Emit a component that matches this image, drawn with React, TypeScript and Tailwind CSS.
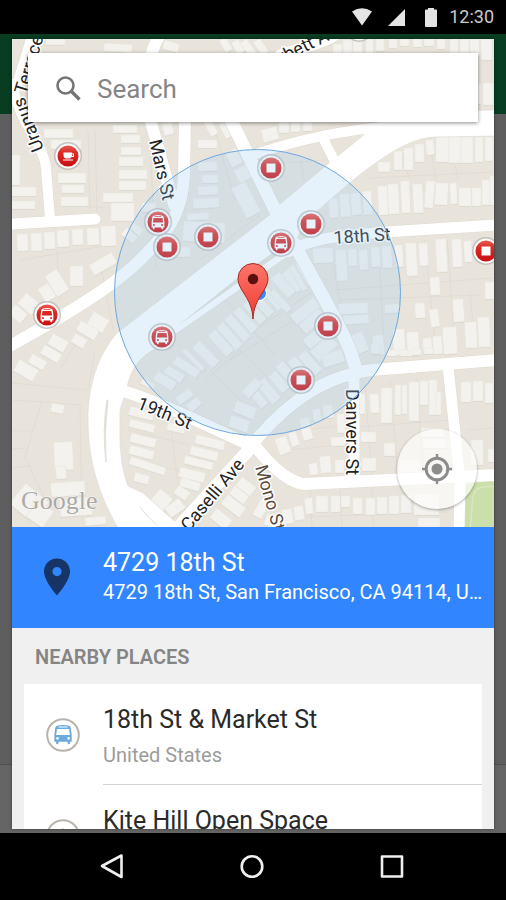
import { useState } from "react";

type Box = [x: number, y: number, w: number, h: number, rotate?: number];

const buildings: Box[] = [
  // north west
  [46, 39, 19, 6], [104, 44, 28, 8, 3], [163, 42, 16, 9, 15], [44, 129, 29, 9], [51, 140, 30, 9],
  [12, 155, 8, 30], [12, 187, 24, 9], [12, 201, 23, 8], [58, 173, 28, 10], [62, 185, 22, 8],
  [61, 197, 27, 9], [113, 125, 24, 8], [121, 135, 19, 8], [121, 147, 20, 8], [119, 157, 24, 9],
  [119, 170, 28, 9], [119, 181, 27, 9], [103, 193, 30, 9], [111, 203, 23, 18],
  [17, 234, 11, 17, -2], [31, 233, 11, 18, -2], [44, 232, 11, 17, -2], [57, 230, 12, 17, -2],
  [72, 229, 11, 16, -2], [87, 228, 12, 17, -2], [101, 226, 15, 20, -2],
  [70, 266, 13, 20], [90, 258, 26, 12, -30], [50, 271, 14, 24, -32], [41, 285, 12, 16, -32],
  [22, 295, 14, 18, -50], [12, 306, 12, 16, -50], [89, 315, 18, 15, 30], [77, 325, 21, 11, 30],
  [72, 336, 14, 10, 30], [49, 337, 18, 12, 30], [41, 349, 20, 10, 30], [29, 357, 17, 10, 30],
  [15, 364, 22, 13, 30],
  // south west
  [51, 404, 13, 9, 10], [54, 442, 19, 28, -3], [56, 466, 10, 13, -3], [51, 482, 34, 14, -4],
  [60, 498, 32, 18, -4], [85, 517, 21, 8, -5], [14, 490, 30, 26, 40], [30, 504, 20, 20, 35],
  // between 19th and caselli
  [141, 381, 14, 6, 25], [129, 409, 25, 9, 14], [129, 422, 26, 8, 14], [130, 436, 26, 9, 14],
  [129, 448, 25, 9, 14], [129, 462, 37, 8, 18], [134, 474, 15, 9, 14], [167, 424, 18, 8, 14],
  [195, 438, 30, 9, 14], [190, 449, 28, 9, 14], [184, 459, 29, 8, 14], [179, 470, 26, 10, 14],
  [180, 480, 20, 9, 16], [175, 488, 14, 10, 35], [153, 492, 17, 16, 40], [166, 502, 18, 12, -35],
  [237, 481, 18, 11, 38], [230, 490, 18, 10, 38], [222, 500, 23, 12, 38], [211, 513, 20, 12, 38],
  [256, 500, 10, 18, 30],
  // north, around mars st
  [163, 123, 10, 12, -15], [198, 140, 19, 8], [198, 162, 19, 9, -2], [202, 175, 16, 8],
  [198, 186, 20, 9, -3], [193, 198, 26, 10, -3], [187, 213, 22, 7, -3], [183, 222, 42, 20, 3],
  [173, 247, 17, 10], [142, 203, 14, 9], [122, 231, 15, 9, 40], [130, 225, 13, 8, 40],
  [207, 120, 8, 16, -28], [222, 122, 9, 16, -28], [228, 150, 12, 16, -28], [236, 167, 14, 14, -28],
  [238, 183, 16, 34, -28], [245, 39, 8, 20, -35], [257, 39, 8, 16, -35], [234, 40, 8, 14, -30],
  [222, 38, 8, 14, -30], [262, 128, 16, 13, -15], [279, 122, 10, 11], [291, 122, 9, 10], [303, 122, 9, 9],
  // north east
  [333, 44, 9, 12], [343, 40, 9, 14], [353, 39, 9, 14], [366, 39, 7, 14], [376, 39, 8, 12],
  [389, 39, 8, 9], [400, 39, 9, 7], [413, 39, 9, 8], [424, 39, 10, 7], [437, 39, 8, 10],
  [450, 39, 8, 14], [460, 39, 9, 14], [470, 39, 9, 18], [481, 39, 11, 21], [478, 84, 3, 20], [483, 83, 10, 22],
  [378, 162, 12, 10], [394, 151, 8, 19], [404, 148, 9, 22], [415, 144, 9, 18], [426, 140, 8, 15, -5],
  [436, 137, 13, 25], [449, 136, 12, 27], [461, 137, 12, 26], [475, 137, 8, 25], [485, 137, 8, 24],
  [329, 198, 9, 20, -5], [340, 194, 10, 23, -5], [351, 193, 10, 22, -5], [363, 191, 9, 24, -3],
  [378, 186, 10, 29, -3], [388, 184, 11, 30, -3], [401, 181, 9, 32, -3], [413, 184, 10, 29, -3],
  [425, 181, 9, 27, 5], [435, 183, 13, 22, 3], [450, 183, 7, 21, -3], [459, 188, 12, 18],
  [472, 188, 9, 18], [482, 180, 8, 25], [490, 176, 4, 29],
  // east, below 18th
  [313, 248, 20, 15, -3], [336, 250, 11, 31, -3], [348, 249, 9, 17, -3], [359, 250, 9, 20, -3],
  [371, 247, 9, 20, -3], [382, 246, 10, 22, -3], [395, 245, 8, 22, -3], [406, 243, 11, 33, -3],
  [419, 243, 9, 23, -3], [436, 239, 11, 33, -3], [452, 239, 10, 28, -3], [464, 241, 8, 21, -3],
  [430, 277, 10, 18, -3], [485, 282, 10, 17], [415, 303, 10, 15, -4], [453, 299, 11, 23, -4],
  [430, 309, 9, 18, -8], [465, 322, 12, 26, -3], [478, 317, 12, 30, -3], [443, 327, 14, 27, -3],
  [433, 336, 9, 18, -3], [423, 338, 9, 16, -3], [407, 332, 12, 24, -3], [393, 329, 12, 26, -3],
  [338, 303, 30, 11, -3], [343, 315, 26, 9, -3], [385, 304, 15, 9, -3], [353, 333, 13, 20, -22],
  [373, 335, 11, 20, -5],
  // below market
  [278, 272, 11, 26, -42], [288, 268, 11, 24, -42], [295, 264, 6, 28, -30], [301, 261, 5, 26, -30],
  [268, 284, 8, 28, -42], [277, 288, 7, 26, -42], [258, 292, 9, 26, -42], [250, 299, 9, 26, -42],
  [241, 306, 9, 28, -42], [233, 313, 9, 30, -42], [225, 321, 9, 30, -42], [216, 329, 10, 28, -42],
  [201, 340, 10, 29, -45], [191, 346, 5, 28, -45], [182, 353, 9, 28, -58], [170, 364, 9, 20, -58],
  [160, 370, 10, 22, -60], [299, 296, 12, 30, 52], [306, 308, 12, 26, 50], [311, 322, 12, 28, 50],
  [317, 335, 14, 26, 48], [322, 352, 22, 13, -18], [305, 350, 10, 26, -42], [294, 356, 10, 24, -42],
  [282, 361, 10, 24, -42], [274, 371, 10, 22, -42], [263, 378, 11, 26, -40], [252, 383, 9, 26, -40],
  [242, 383, 20, 10, -48], [234, 404, 22, 12, 22], [229, 418, 20, 12, 18], [176, 392, 17, 9, -35],
  [187, 400, 14, 9, -40],
  // south east
  [370, 394, 9, 19, -3], [359, 394, 6, 20], [381, 388, 11, 35], [395, 385, 6, 30], [402, 385, 5, 29],
  [409, 382, 10, 39], [420, 381, 8, 24], [429, 380, 8, 35], [436, 392, 5, 23], [461, 382, 10, 20],
  [473, 381, 10, 20], [485, 383, 8, 20], [361, 432, 15, 10], [384, 443, 11, 13], [362, 458, 14, 13],
  [421, 428, 23, 9], [423, 439, 23, 9], [399, 460, 20, 13], [471, 440, 12, 25], [488, 449, 6, 13],
  [277, 437, 12, 17, -20], [290, 432, 8, 14, -20], [302, 427, 10, 13, -15], [300, 418, 10, 9, -12],
  [313, 409, 8, 13, -10], [323, 405, 10, 13, -5], [337, 414, 8, 19, -3], [320, 456, 11, 17, -5],
  [309, 463, 9, 12, -8], [331, 437, 14, 9, -3], [335, 460, 9, 13], [371, 344, 10, 10],
  [265, 515, 12, 12, 20], [282, 509, 11, 15, -10], [294, 506, 10, 14, -8], [305, 498, 8, 16, -5],
  [316, 496, 12, 16], [331, 496, 9, 16], [341, 496, 9, 11], [353, 498, 9, 16], [366, 498, 9, 17],
  [377, 497, 10, 17], [389, 496, 10, 18], [401, 495, 10, 18], [414, 494, 25, 21], [418, 518, 22, 9],
  [387, 350, 10, 6], [400, 350, 8, 6], [412, 349, 9, 6], [424, 348, 9, 6],
];

const parcels =
  "M12 383 L84 390 M42 401 L25 457 L45 500 M80 404 L82 520 M12 431 L32 431 M12 449 L28 448 M12 468 L30 466 M12 400 L43 402 L81 405 " +
  "M60 370 L78 340 M88 390 L95 350 M100 260 L115 340 M20 260 L110 245 M57 250 L60 300 M95 130 L97 215 M88 130 L90 210 M75 205 L105 208 " +
  "M150 140 L156 270 M170 420 L180 500 M128 430 L190 445 M128 457 L180 471 M205 450 L160 520 M225 300 L275 355 M240 350 L290 400 M210 370 L250 410 " +
  "M255 330 L330 280 M230 360 L310 310 M205 380 L240 350 M330 245 L345 330 M335 290 L493 278 M340 300 L480 295 M378 240 L384 345 M425 240 L435 345 M447 240 L455 345 M470 290 L475 345 " +
  "M370 178 L493 172 M400 150 L410 180 M430 145 L436 180 M455 165 L458 180 M365 385 L372 475 M390 380 L398 475 M417 378 L423 472 M358 427 L450 420 M300 430 L350 425 M290 450 L347 444 " +
  "M310 490 L312 527 M340 490 L342 527 M372 490 L373 527 M300 517 L450 512 M468 400 L493 398 M468 430 L493 428 M200 260 L260 215 M215 130 L235 200 M255 165 L325 160 M300 160 L304 180";

const roads: [d: string, width: number][] = [
  ["M31 39 L16 88", 10],
  ["M12 84 C20 125 44 145 46 168 L50 219", 10],
  ["M12 224 L95 219", 11],
  ["M162 32 C148 50 144 85 149 115 L174 205", 12],
  ["M185 115 L184 175 C183 215 165 235 140 260 C112 288 60 318 8 347", 12],
  ["M225 108 L278 216", 13],
  ["M256 154 C300 139 345 130 392 126", 10],
  ["M324 140 L338 168", 10],
  ["M280 55 C310 45 335 42 345 25", 11],
  ["M496 225 L385 232 C345 236 315 236 288 252", 11],
  ["M294 243 C310 275 338 320 350 350 L357 372", 13],
  ["M354 372 L354 480", 11],
  ["M496 360 L372 370 C325 376 290 400 254 442", 12],
  ["M120 390 C160 402 205 425 254 447", 12],
  ["M254 444 L174 532", 13],
  ["M250 440 C270 465 285 480 303 484 L496 475", 12],
  ["M448 366 L460 480 L459 530", 11],
];

const market =
  "M496 110 L390 112 L360 138 L338 156 L329 163 L280 204 L272 213 L117 333 C98 355 88 385 88 420 C88 470 105 505 118 528 L182 528 L143 493 L128 486 C118 460 120 430 120 410 L127 388 C130 370 140 358 150 352 L290 255 L300 232 L316 212 L353 180 C385 155 410 138 435 137 L496 136 Z";

type Label = { text: string; x: number; y: number; rotate: number; color?: string };

const labels: Label[] = [
  { text: "Uranus", x: 44, y: 149, rotate: -111 },
  { text: "Terrace", x: 26, y: 95, rotate: -73 },
  { text: "Corbett Ave", x: 262, y: 73, rotate: -26 },
  { text: "Mars St", x: 149, y: 141, rotate: 77 },
  { text: "18th St", x: 334, y: 244, rotate: -4 },
  { text: "19th St", x: 136, y: 408, rotate: 22 },
  { text: "Danvers St", x: 346, y: 389, rotate: 90 },
  { text: "Caselli Ave", x: 189, y: 532, rotate: -50 },
  { text: "Mono St", x: 255, y: 467, rotate: 74, color: "#5a4a3c" },
];

type Poi = { kind: "bus" | "stop" | "cafe"; x: number; y: number };

const pois: Poi[] = [
  { kind: "cafe", x: 68, y: 156 },
  { kind: "stop", x: 359, y: 28 },
  { kind: "stop", x: 271, y: 168 },
  { kind: "bus", x: 158, y: 222 },
  { kind: "stop", x: 167, y: 247 },
  { kind: "stop", x: 208, y: 237 },
  { kind: "bus", x: 281, y: 243 },
  { kind: "stop", x: 311, y: 224 },
  { kind: "stop", x: 486, y: 251 },
  { kind: "bus", x: 47, y: 315 },
  { kind: "bus", x: 162, y: 337 },
  { kind: "stop", x: 328, y: 326 },
  { kind: "stop", x: 301, y: 380 },
];

// 16x18 bus seen from the front, shared by the map and the list
const busPath =
  "M2.5 0.9 Q8 -0.7 13.5 0.9 Q14.9 1.4 15.2 3 L16 9 V15.6 H14.4 V17.2 Q13.3 18.6 12.2 17.2 V15.6 H3.8 V17.2 Q2.7 18.6 1.6 17.2 V15.6 H0 V9 L0.8 3 Q1.1 1.4 2.5 0.9 Z M3.8 1.6 V2.6 H12.2 V1.6 Z M2.4 3.8 L1.6 9.4 H14.4 L13.6 3.8 Z M2.9 11.4 A1.2 1.2 0 1 0 2.9 13.8 A1.2 1.2 0 1 0 2.9 11.4 Z M13.1 11.4 A1.2 1.2 0 1 0 13.1 13.8 A1.2 1.2 0 1 0 13.1 11.4 Z";

function PoiMarker({ kind, x, y }: Poi) {
  return (
    <g transform={`translate(${x} ${y})`}>
      <circle r="14" fill="#b9b7b4" opacity="0.8" />
      <circle r="12.5" fill="#fbfbfb" />
      <circle r="10.5" fill="url(#poi)" />
      {kind === "stop" && <rect x="-4.5" y="-4.5" width="9" height="9" fill="#fff" />}
      {kind === "bus" && <path d={busPath} transform="translate(-6.4 -7) scale(0.8)" fill="#fff" fillRule="evenodd" />}
      {kind === "cafe" && (
        <g fill="#fff">
          <path d="M-4.5 -3.5 H4 V-2.5 H6 V1 H3.5 Q2.5 2.5 1 2.5 H-2 Q-4.5 2 -4.5 -1 Z M4 -1.5 V0 H5 V-1.5 Z" fillRule="evenodd" />
          <rect x="-5" y="3.5" width="10" height="1" />
        </g>
      )}
    </g>
  );
}

function StreetMap() {
  return (
    <svg viewBox="12 39 482 488" preserveAspectRatio="xMidYMid slice" className="block h-full w-full" role="img" aria-label="Map">
      <defs>
        <linearGradient id="poi" x1="0" y1="0" x2="0" y2="1">
          <stop offset="0" stopColor="#e85a52" />
          <stop offset="0.35" stopColor="#dc2a25" />
          <stop offset="1" stopColor="#c90f12" />
        </linearGradient>
        <linearGradient id="pin" x1="0" y1="0" x2="0" y2="1">
          <stop offset="0" stopColor="#fe7569" />
          <stop offset="1" stopColor="#ee3d33" />
        </linearGradient>
      </defs>
      <rect x="0" y="30" width="506" height="510" fill="#e8e4dc" />
      <path d={parcels} fill="none" stroke="#ded9d0" strokeWidth="0.7" />
      {buildings.map(([x, y, w, h, rotate = 0], i) => (
        <g key={i} transform={`rotate(${rotate} ${x + w / 2} ${y + h / 2})`}>
          <rect x={x} y={y + 0.8} width={w} height={h} fill="#d8d4cb" />
          <rect x={x} y={y} width={w} height={h} fill="#f3f2ee" stroke="#e8e5de" strokeWidth="0.5" />
        </g>
      ))}
      <path d="M466 484 L496 480 V530 H464 Z" fill="#cbdfaa" />
      <path d="M470 530 L473 496 Q475 488 483 487 L496 486" fill="none" stroke="#d9e6c2" strokeWidth="1.5" />

      <g fill="none" strokeLinejoin="round" strokeLinecap="round">
        {roads.map(([d, width]) => (
          <path key={d} d={d} stroke="#dfdad0" strokeWidth={width + 1} />
        ))}
      </g>
      <path d={market} fill="#fff" stroke="#dfdad0" strokeWidth="0.6" />
      <g fill="none" stroke="#fff" strokeLinejoin="round" strokeLinecap="round">
        {roads.map(([d, width]) => (
          <path key={d} d={d} strokeWidth={width} />
        ))}
      </g>
      <path d="M331 144 L360 138 L338 156 Z" fill="#e8e4dc" />
      <path d="M176 327 L240 276 L288 242 L291 246 L243 279 Z" fill="#e3dfd7" />
      <path d="M107 400 Q102 430 106 462 Q104 430 108 400 Z" fill="#e3dfd7" stroke="#e3dfd7" />
      <path d="M140 507 Q148 518 157 525" fill="none" stroke="#e3dfd7" />

      <g fontFamily="Roboto, sans-serif" fontSize="18" stroke="#fff" strokeWidth="3" strokeLinejoin="round" paintOrder="stroke">
        {labels.map(({ text, x, y, rotate, color = "#222" }) => (
          <text key={text} transform={`translate(${x} ${y}) rotate(${rotate})`} fill={color}>
            {text}
          </text>
        ))}
      </g>
      {pois.map((poi) => (
        <PoiMarker key={`${poi.x}-${poi.y}`} {...poi} />
      ))}
      <circle cx="257.5" cy="292.5" r="143" fill="#9fcdf0" fillOpacity="0.26" stroke="#6ea8de" strokeWidth="1" />

      <circle cx="259" cy="293" r="8" fill="#fff" />
      <circle cx="259" cy="293" r="7" fill="#3f86f7" />
      <path
        d="M253 319 C252 297 238 291 238 278.5 A15 15 0 0 1 268 278.5 C268 291 254 297 253 319 Z"
        fill="url(#pin)"
        stroke="#a52b22"
        strokeWidth="1"
      />
      <circle cx="253" cy="279" r="5.2" fill="#5b100d" />

      <text x="21" y="509" fontFamily="'Liberation Serif', serif" fontSize="26" fill="#9c9a96" stroke="#fff" strokeWidth="1" paintOrder="stroke" opacity="0.8">
        Google
      </text>
    </svg>
  );
}

function StatusBar() {
  return (
    <header className="flex h-[34px] shrink-0 items-center justify-end bg-black pr-3 text-[#e4e4e4]">
      <svg viewBox="0 0 20 18" className="mr-4 h-[18px] w-5" fill="currentColor" aria-hidden="true">
        <path d="M0 3.5 Q10 -3 20 3.5 L10 17.5 Z" />
      </svg>
      <svg viewBox="0 0 17 17" className="mr-5 size-[17px]" fill="currentColor" aria-hidden="true">
        <path d="M0 17 L17 0 V17 Z" />
      </svg>
      <svg viewBox="0 0 12 19" className="mr-3 h-[19px] w-3" fill="currentColor" aria-hidden="true">
        <path d="M3 0 H9 V1.5 H11 Q12 1.5 12 2.5 V18 Q12 19 11 19 H1 Q0 19 0 18 V2.5 Q0 1.5 1 1.5 H3 Z" />
      </svg>
      <time className="text-lg text-[#cacaca]">12:30</time>
    </header>
  );
}

function NavBar() {
  return (
    <nav className="flex h-[67px] shrink-0 justify-center bg-black text-[#f0f0f0]">
      <button type="button" aria-label="Back" className="flex w-[140px] items-center justify-center">
        <svg viewBox="0 0 26 26" className="size-[26px]" fill="none" stroke="currentColor" strokeWidth="2.6" strokeLinejoin="round">
          <path d="M2 12 L21.5 1.5 V23 Z" />
        </svg>
      </button>
      <button type="button" aria-label="Home" className="flex w-[140px] items-center justify-center">
        <svg viewBox="0 0 26 26" className="size-[26px]" fill="none" stroke="currentColor" strokeWidth="2.6">
          <circle cx="12" cy="12.5" r="10.3" />
        </svg>
      </button>
      <button type="button" aria-label="Recent apps" className="flex w-[140px] items-center justify-center">
        <svg viewBox="0 0 26 26" className="size-[26px]" fill="none" stroke="currentColor" strokeWidth="2.6" strokeLinejoin="round">
          <rect x="2" y="2.5" width="20" height="20" />
        </svg>
      </button>
    </nav>
  );
}

const places = [
  { name: "18th St & Market St", detail: "United States", icon: "bus" },
  { name: "Kite Hill Open Space", detail: "United States", icon: "park" },
];

function PlaceIcon({ icon }: { icon: string }) {
  return (
    <svg viewBox="0 0 34 34" className="size-[34px] shrink-0" aria-hidden="true">
      <circle cx="17" cy="17" r="15.8" fill="#fff" stroke="#b9b4ab" strokeWidth="2" />
      {icon === "bus" ? (
        <path d={busPath} transform="translate(8.4 6.8) scale(1.08)" fill="#6da9dd" fillRule="evenodd" />
      ) : (
        <path d="M17 9 L23 18 H20 L24 24 H18 V27 H16 V24 H10 L14 18 H11 Z" fill="#7cb93f" />
      )}
    </svg>
  );
}

export default function App() {
  const [query, setQuery] = useState("");

  return (
    <div className="flex h-screen flex-col bg-black font-[Roboto,sans-serif]">
      <StatusBar />

      <main className="relative flex min-h-0 flex-1 flex-col bg-[#5e5e5e] px-3 pt-[5px] pb-1">
        <div className="absolute inset-x-0 top-0 h-20 bg-[#083d22]" />
        <div className="absolute inset-x-0 bottom-0 h-[69px] border-t border-[#505050] bg-[#656565]" />

        <div className="relative flex min-h-0 flex-1 flex-col overflow-hidden bg-[#f0f0f0] shadow-[0_0_3px_rgba(0,0,0,0.4)]">
          <section className="relative h-[488px] shrink-0">
            <StreetMap />
            <label className="absolute inset-x-4 top-3.5 flex h-[69px] items-center bg-white pt-0.5 pl-[27px] shadow-[0_1px_4px_rgba(0,0,0,0.45)]">
              <svg viewBox="0 0 26 26" className="mr-4 size-[26px] shrink-0" fill="none" stroke="#757575" aria-hidden="true">
                <circle cx="10.5" cy="9.5" r="8" strokeWidth="2.6" />
                <path d="M16 15 L24.5 23.5" strokeWidth="3.4" />
              </svg>
              <input
                type="text"
                value={query}
                onChange={(e) => setQuery(e.target.value)}
                placeholder="Search"
                aria-label="Search"
                className="min-w-0 flex-1 bg-transparent text-[26px] leading-8 outline-none placeholder:text-[#858585]"
              />
            </label>
            <button
              type="button"
              aria-label="My location"
              className="absolute right-[17px] bottom-[18px] flex size-20 items-center justify-center rounded-full bg-white/65 shadow-[0_1px_3px_rgba(0,0,0,0.35)]"
            >
              <svg viewBox="0 0 32 32" className="size-8" fill="none" stroke="#8c8c8c" strokeWidth="3">
                <circle cx="16" cy="16" r="10.8" />
                <circle cx="16" cy="16" r="5.5" fill="#8c8c8c" stroke="none" />
                <path d="M16 1 V6 M16 26 V31 M1 16 H6 M26 16 H31" strokeWidth="2.4" />
              </svg>
            </button>
          </section>

          <button type="button" className="flex h-[101px] shrink-0 bg-[#3185ff] pr-2 pl-8 text-left text-white">
            <svg viewBox="0 0 26 38" className="mt-[31px] mr-[33px] h-[38px] w-[26px] shrink-0" aria-hidden="true">
              <path d="M13 0.5 C5.5 0.5 0 6.3 0 13.5 C0 23 13 37.5 13 37.5 C13 37.5 26 23 26 13.5 C26 6.3 20.5 0.5 13 0.5 Z M13 9 A4.6 4.6 0 1 1 13 18.2 A4.6 4.6 0 1 1 13 9 Z" fill="#163466" fillRule="evenodd" />
            </svg>
            <span className="min-w-0 flex-1 pt-5">
              <span className="block text-[25px] leading-8">4729 18th St</span>
              <span className="block truncate text-xl leading-[26px]">4729 18th St, San Francisco, CA 94114, United States</span>
            </span>
          </button>

          <h2 className="flex h-14 shrink-0 items-center pt-0.5 pl-[23px] text-xl font-semibold text-[#858585]">NEARBY PLACES</h2>

          <ul className="mx-3 min-h-0 flex-1 overflow-hidden bg-white">
            {places.map(({ name, detail, icon }) => (
              <li key={name}>
                <button type="button" className="flex h-[101px] w-full items-center gap-[23px] pl-[22px] text-left">
                  <PlaceIcon icon={icon} />
                  <span className="h-full flex-1 border-b border-[#d4d4d4] pt-5">
                    <span className="block text-[25px] leading-8 text-[#2a2a2a]">{name}</span>
                    <span className="mt-1.5 block text-xl leading-[26px] text-[#9c9c9c]">{detail}</span>
                  </span>
                </button>
              </li>
            ))}
          </ul>
        </div>
      </main>

      <NavBar />
    </div>
  );
}
